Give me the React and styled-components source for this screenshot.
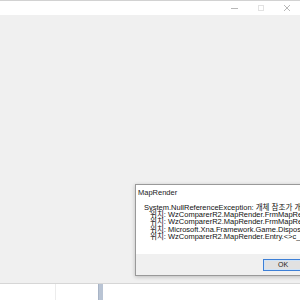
import React from "react";
import styled, { createGlobalStyle } from "styled-components";

const GlobalStyle = createGlobalStyle`
  html, body {
    margin: 0;
    padding: 0;
    overflow: hidden;
    background: #ffffff;
  }
  body {
    font-family: "Liberation Sans", "Noto Sans CJK KR", sans-serif;
  }
`;

const Window = styled.div`
  position: relative;
  width: 300px;
  height: 300px;
  display: flex;
  flex-direction: column;
  overflow: hidden;
`;

const TitleBar = styled.div`
  height: 14px;
  border-top: 1px solid #d2d2d2;
  background: #ffffff;
  display: flex;
  justify-content: flex-end;
  align-items: center;
`;

const CtrlButton = styled.div`
  width: 26px;
  height: 14px;
  display: flex;
  align-items: center;
  justify-content: center;
  color: #b8b8b8;
`;

const Client = styled.div`
  height: 268px;
  background: #f0f0f0;
  border-bottom: 1px solid #d6d6d6;
`;

const Footer = styled.div`
  flex: 1;
  display: flex;
  background: #ffffff;
`;

const FooterCell = styled.div`
  width: ${(p) => p.$w}px;
  border-right: ${(p) => (p.$line ? "1px solid #ececec" : "none")};
`;

const Splitter = styled.div`
  width: 4px;
  background: #b9c4d4;
  border-left: 1px solid #a8b4c6;
`;

const Dialog = styled.div`
  position: absolute;
  left: 135px;
  top: 184px;
  width: 200px;
  height: 90px;
  display: flex;
  flex-direction: column;
  background: #ffffff;
  border: 1px solid #999999;
  box-shadow: 0 1px 4px rgba(0, 0, 0, 0.22);
`;

const DialogTitle = styled.div`
  height: 15px;
  padding-left: 2px;
  display: flex;
  align-items: center;
  font-size: 7.5px;
  color: #1a1a1a;
`;

const DialogBody = styled.div`
  flex: 1;
  padding: 4px 0 0 8px;
  font-size: 7.5px;
  line-height: 7.2px;
  color: #111111;
  white-space: nowrap;
`;

const Line = styled.div`
  padding-left: ${(p) => (p.$indent ? 6 : 0)}px;
`;

const ButtonBar = styled.div`
  height: 21px;
  background: #f0f0f0;
  display: flex;
  align-items: center;
  padding-left: 127px;
`;

const OkButton = styled.div`
  width: 38px;
  height: 10px;
  border: 1px solid #3d7fd6;
  background: #e1e1e1;
  box-shadow: inset 0 0 0 1px #d0e4f8;
  font-size: 7px;
  line-height: 10px;
  text-align: center;
  color: #222222;
`;

const lines = [
  "System.NullReferenceException: 개체 참조가 개체의 인스턴스로 설정되지 않았습니다.",
  "위치: WzComparerR2.MapRender.FrmMapRender.Update(GameTime gameTime)",
  "위치: WzComparerR2.MapRender.FrmMapRender.Draw(GameTime gameTime)",
  "위치: Microsoft.Xna.Framework.Game.Dispose(Boolean disposing)",
  "위치: WzComparerR2.MapRender.Entry.<>c__DisplayClass.<OnMapRender>b__0()",
];

function App() {
  return (
    <Window>
      <GlobalStyle />
      <TitleBar>
        <CtrlButton>
          <svg width="8" height="8" viewBox="0 0 8 8">
            <path d="M0 4.5h7" stroke="currentColor" strokeWidth="1" />
          </svg>
        </CtrlButton>
        <CtrlButton>
          <svg width="8" height="8" viewBox="0 0 8 8">
            <rect x="1.5" y="1.5" width="5" height="5" fill="none" stroke="#e2e2e2" strokeWidth="1" />
          </svg>
        </CtrlButton>
        <CtrlButton>
          <svg width="8" height="8" viewBox="0 0 8 8">
            <path d="M1 1l6 6M7 1l-6 6" stroke="currentColor" strokeWidth="1" />
          </svg>
        </CtrlButton>
      </TitleBar>
      <Client />
      <Footer>
        <FooterCell $w={55} $line />
        <FooterCell $w={42} />
        <Splitter />
      </Footer>

      <Dialog>
        <DialogTitle>MapRender</DialogTitle>
        <DialogBody>
          {lines.map((t, i) => (
            <Line key={i} $indent={i > 0}>
              {t}
            </Line>
          ))}
        </DialogBody>
        <ButtonBar>
          <OkButton>OK</OkButton>
        </ButtonBar>
      </Dialog>
    </Window>
  );
}

export default App;
